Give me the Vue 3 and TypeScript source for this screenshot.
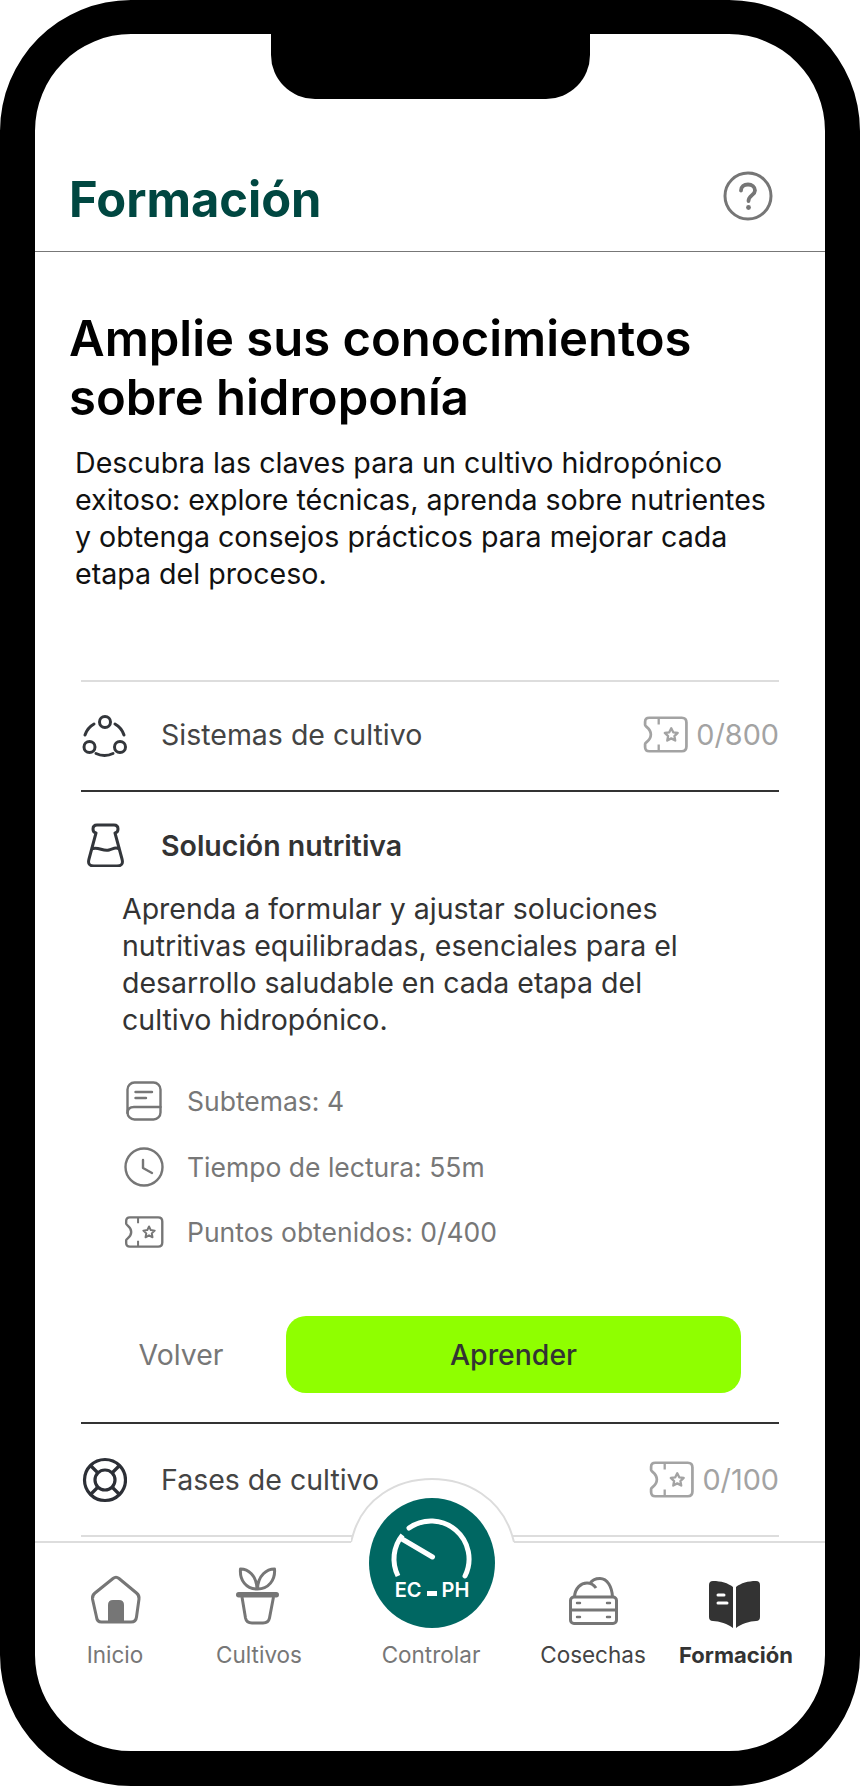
<template>
  <div class="phone">
    <svg class="defs" width="0" height="0" aria-hidden="true">
      <symbol id="ticket" viewBox="0 0 43 35">
        <path
          d="M6 1.500H37Q41.500 1.500 41.500 6V29Q41.500 33.500 37 33.500H6Q2 33.500 2 29.500V26.500C2 25 7.500 23.500 7.500 17.500C7.500 11.500 2 10 2 8.500V5.500Q2 1.500 6 1.500Z"
          fill="none"
          stroke="currentColor"
          stroke-width="2.600"
        />
        <path d="M15 1.500V8M15 27V33.500" fill="none" stroke="currentColor" stroke-width="2.200" />
        <path
          d="M27 11.500L28.900 15.400L33.200 16L30 19L30.800 23.300L27 21.200L23.200 23.300L24 19L20.800 16L25.100 15.400Z"
          fill="none"
          stroke="currentColor"
          stroke-width="2.200"
          stroke-linejoin="round"
        />
      </symbol>
    </svg>

    <div class="notch" />

    <header class="top">
      <h2 class="page-title">Formación</h2>
      <svg class="help" width="50" height="50" viewBox="0 0 50 50">
        <circle cx="25" cy="25" r="23" fill="none" stroke="#767676" stroke-width="3" />
        <path
          d="M18 19.500C18 15.500 21 13.500 25 13.500C29 13.500 32 16 32 19.500C32 24 25.500 24.500 25.500 30"
          fill="none"
          stroke="#767676"
          stroke-width="3.800"
          stroke-linecap="round"
        />
        <circle cx="25.500" cy="36.500" r="2.400" fill="#767676" />
      </svg>
    </header>

    <main class="content">
      <h1 class="headline">Amplie sus conocimientos sobre hidroponía</h1>
      <p class="intro">
        Descubra las claves para un cultivo hidropónico exitoso: explore técnicas, aprenda sobre
        nutrientes y obtenga consejos prácticos para mejorar cada etapa del proceso.
      </p>

      <section class="topics">
        <div class="topic-row first">
          <span class="topic-icon">
            <svg width="48" height="48" viewBox="0 0 48 48" fill="none" stroke="#33363b" stroke-width="3" stroke-linecap="round">
              <circle cx="24" cy="11" r="5.500" />
              <circle cx="8.500" cy="36" r="5.500" />
              <circle cx="39" cy="36" r="5.500" />
              <path d="M4 24C5.500 19.500 8.500 15.500 13 13M34 13C38.500 15.500 41.500 19.500 43 24M15 42.500C20 45 27 45 32 42.500" />
            </svg>
          </span>
          <span class="topic-name">Sistemas de cultivo</span>
          <span class="points">
            <svg class="ticket"><use href="#ticket" /></svg>
            0/800
          </span>
        </div>

        <div class="topic-open">
          <div class="open-head">
            <span class="topic-icon">
              <svg class="flask" width="37" height="44" viewBox="0 0 37 44" fill="none" stroke="#33363b" stroke-width="3" stroke-linejoin="round">
                <path d="M10 2H27Q31 2 31 6Q31 9.500 28 10L35 36Q37 43 30 43H7Q0 43 2 36L9 10Q6 9.500 6 6Q6 2 10 2Z" />
                <path d="M4.500 26C11 23 16 29 22 27S29 24 32.500 26" />
              </svg>
            </span>
            <span class="open-name">Solución nutritiva</span>
          </div>
          <p class="open-text">
            Aprenda a formular y ajustar soluciones nutritivas equilibradas, esenciales para el
            desarrollo saludable en cada etapa del cultivo hidropónico.
          </p>
          <ul class="facts">
            <li>
              <span class="fact-icon">
                <svg width="36" height="40" viewBox="0 0 36 40" fill="none" stroke="#767676" stroke-width="2.400" stroke-linecap="round">
                  <rect x="1.500" y="1.500" width="33" height="37" rx="7" />
                  <path d="M1.500 32Q1.500 26 8 26H34.500M9.500 11H26M9.500 17H20" />
                </svg>
              </span>
              Subtemas: 4
            </li>
            <li>
              <span class="fact-icon">
                <svg width="40" height="40" viewBox="0 0 40 40" fill="none" stroke="#767676" stroke-width="2.400" stroke-linecap="round" stroke-linejoin="round">
                  <circle cx="20" cy="20" r="18.500" />
                  <path d="M19 13V21L28 26" />
                </svg>
              </span>
              Tiempo de lectura: 55m
            </li>
            <li>
              <span class="fact-icon">
                <svg class="ticket-small"><use href="#ticket" /></svg>
              </span>
              Puntos obtenidos: 0/400
            </li>
          </ul>
          <div class="actions">
            <button class="btn-back" type="button">Volver</button>
            <button class="btn-learn" type="button">Aprender</button>
          </div>
        </div>

        <div class="topic-row last">
          <span class="topic-icon">
            <svg width="46" height="46" viewBox="0 0 46 46" fill="none" stroke="#2c2f36" stroke-width="3.200">
              <circle cx="24" cy="23" r="20.500" />
              <circle cx="24" cy="23" r="10" />
              <path d="M9.500 8.500L17 16M38.500 8.500L31 16M9.500 37.500L17 30M38.500 37.500L31 30" />
            </svg>
          </span>
          <span class="topic-name">Fases de cultivo</span>
          <span class="points">
            <svg class="ticket"><use href="#ticket" /></svg>
            0/100
          </span>
        </div>
      </section>
    </main>

    <nav class="tabs">
      <svg class="bump" width="164" height="68" viewBox="0 0 164 68">
        <path d="M0 67V65L2 58C12 22 45 2 81 2C117 2 150 22 161 58L163 65V67Z" fill="#fff" />
        <path d="M0 65L2 58C12 22 45 2 81 2C117 2 150 22 161 58L163 65" fill="none" stroke="#dcdcdc" stroke-width="2" />
      </svg>

      <div class="tab">
        <svg class="tab-icon" viewBox="0 0 70 66">
          <path d="M33 14.500Q36 12 39 14.500L56.500 29Q59.500 31.500 59 35L56.500 53Q56 58 51 58H21.500Q17 58 16.500 53L12.500 35Q12 31.500 15 29Z" fill="none" stroke="#767676" stroke-width="3" />
          <path d="M28 58V41Q28 36 33 36H39Q44 36 44 41V58Z" fill="#767676" />
        </svg>
        <span class="tab-label">Inicio</span>
      </div>

      <div class="tab">
        <svg class="tab-icon" viewBox="0 0 70 66">
          <path d="M16.500 5C24 5 32.500 11 33 25C22 25 15.500 16 16.500 5ZM50.500 5C43 5 34 11 33.500 25C44.500 25 51.500 16 50.500 5Z" fill="none" stroke="#767676" stroke-width="3" stroke-linejoin="round" />
          <rect x="12" y="28" width="43" height="5.500" rx="2.700" fill="#767676" />
          <path d="M18 33L21.500 54Q22.500 59 28 59H39Q44.500 59 45.500 54L49.500 33" fill="none" stroke="#767676" stroke-width="3" />
        </svg>
        <span class="tab-label">Cultivos</span>
      </div>

      <div class="tab">
        <div class="tab-icon" />
        <span class="tab-label">Controlar</span>
      </div>

      <div class="tab">
        <svg class="tab-icon" viewBox="0 0 70 66">
          <rect x="12.500" y="33" width="46" height="26.500" rx="3.500" fill="none" stroke="#767676" stroke-width="3" />
          <path d="M12.500 46H58.500" stroke="#767676" stroke-width="3" />
          <path d="M16.500 33C17 24 23 19 29 19C33 19 36 21 38 24M32 19.500C34 16 38.500 14.500 42 14.500C49.500 14.500 54 23 54.500 33" fill="none" stroke="#767676" stroke-width="3" />
          <path d="M19 39H22M49 39H52M19 53H22M49 53H52" stroke="#767676" stroke-width="2.400" stroke-linecap="round" />
        </svg>
        <span class="tab-label dark">Cosechas</span>
      </div>

      <div class="tab">
        <svg class="tab-icon" viewBox="0 0 70 66">
          <path d="M12 17C20 17 27 19 32 23V64C27 60 18 57 12 57Q8 57 8 53V21Q8 17 12 17Z" fill="#333" />
          <path d="M35 23C40 19 47 17 55 17Q59 17 59 21V53Q59 57 55 57C49 57 40 60 35 64Z" fill="#333" />
          <path d="M17 31H23M17 39H26" stroke="#fff" stroke-width="3" stroke-linecap="round" />
        </svg>
        <span class="tab-label active">Formación</span>
      </div>

      <div class="control">
        <svg width="126" height="96" viewBox="0 0 126 96" fill="none" stroke="#fff" stroke-width="5">
          <path d="M29 78A38 38 0 0 1 33.500 37" />
          <path d="M40 30A38 38 0 0 1 96 78" stroke-linecap="round" />
          <path d="M33 41L63.500 59" stroke-linecap="round" />
        </svg>
        <div class="control-text">
          <span>EC</span>
          <i class="control-dash" />
          <span>PH</span>
        </div>
      </div>
    </nav>
  </div>
</template>

<script setup lang="ts">
</script>

<style>
html,
body {
  background: #fff;
}
</style>

<style scoped>
.phone {
  position: relative;
  box-sizing: border-box;
  display: flex;
  flex-direction: column;
  width: 860px;
  height: 1786px;
  border: 35px solid #000;
  border-top-width: 34px;
  border-radius: 131px;
  background: #fff;
  overflow: hidden;
  font-family: Inter, "Noto Sans", sans-serif;
}

.defs {
  position: absolute;
}

.notch {
  position: absolute;
  top: 0;
  left: 236px;
  width: 319px;
  height: 65px;
  border-radius: 0 0 44px 44px;
  background: #000;
}

.top {
  box-sizing: border-box;
  flex: none;
  display: flex;
  align-items: center;
  justify-content: space-between;
  height: 218px;
  padding: 113px 52px 0 34px;
  border-bottom: 1px solid #777;
}

.help {
  margin-top: -6px;
}

.page-title {
  margin: 0;
  font-size: 48.800px;
  font-weight: 700;
  color: #004741;
}

.content {
  flex: 1;
  min-height: 0;
  overflow: hidden;
}

.headline {
  width: 680px;
  margin: 57px 0 0 34px;
  font-size: 49px;
  line-height: 59px;
  font-weight: 600;
  color: #000;
}

.intro {
  width: 705px;
  margin: 17px 0 0 40px;
  font-size: 28.600px;
  line-height: 37px;
  color: #111;
}

.topics {
  margin: 88px 46px 0;
}

.topic-row {
  box-sizing: border-box;
  display: flex;
  align-items: center;
  height: 110px;
  border-top: 2px solid #ddd;
  color: #444;
  font-size: 28.500px;
}

.topic-row.first {
  padding-bottom: 3px;
}

.topic-row.last {
  height: 115px;
  border-top: 2px solid #333;
  border-bottom: 2px solid #ddd;
}

.topic-icon {
  flex: none;
  display: flex;
  width: 80px;
}

.topic-name {
  flex: 1;
}

.points {
  display: flex;
  align-items: center;
  gap: 8px;
  color: #a3a3a3;
  font-size: 28.800px;
}

.ticket {
  width: 45px;
  height: 37px;
}

.ticket-small {
  width: 40px;
  height: 32px;
}

.flask {
  margin-left: 6px;
}

.topic-open {
  border-top: 2px solid #333;
  padding: 31px 0 29px;
  color: #333;
}

.open-head {
  display: flex;
  align-items: center;
  height: 44px;
}

.open-name {
  font-size: 28.500px;
  font-weight: 600;
}

.open-text {
  width: 560px;
  margin: 23px 0 0 41px;
  font-size: 28.500px;
  line-height: 37px;
}

.facts {
  margin: 30px 0 0 43px;
  padding: 0;
  list-style: none;
  color: #777;
  font-size: 26.500px;
}

.facts li {
  display: flex;
  align-items: center;
  gap: 23px;
  height: 65.700px;
}

.fact-icon {
  display: flex;
  justify-content: center;
  width: 40px;
  color: #767676;
}

.actions {
  display: flex;
  margin-top: 51px;
}

.btn-back,
.btn-learn {
  border: 0;
  background: none;
  font-family: inherit;
  font-size: 28.400px;
  height: 77px;
}

.btn-back {
  width: 200px;
  margin-right: 5px;
  color: #777;
}

.btn-learn {
  width: 455px;
  border-radius: 20px;
  background: #8fff00;
  color: #333;
  font-weight: 500;
}

.tabs {
  position: relative;
  box-sizing: border-box;
  flex: none;
  display: grid;
  grid-template-columns: 130px 158px 186px 138px 148px;
  height: 210px;
  padding: 21px 0 0 15px;
  border-top: 2px solid #ddd;
}

.bump {
  position: absolute;
  top: -66px;
  left: 316px;
}

.tab {
  display: flex;
  flex-direction: column;
  align-items: center;
}

.tab-icon {
  width: 70px;
  height: 66px;
}

.tab-label {
  margin-top: 9px;
  font-size: 22.500px;
  line-height: 32px;
  color: #777;
}

.tab-label.dark {
  color: #444;
}

.tab-label.active {
  font-size: 22px;
  font-weight: 700;
  color: #333;
}

.control {
  position: absolute;
  top: -45px;
  left: 334px;
  width: 126px;
  height: 130px;
  border-radius: 50%;
  background: #006762;
}

.control svg {
  display: block;
}

.control-text {
  display: flex;
  align-items: center;
  justify-content: center;
  gap: 5px;
  margin-top: -14px;
  font-size: 20px;
  font-weight: 600;
  line-height: 20px;
  color: #fff;
}

.control-dash {
  width: 10px;
  height: 5px;
  margin-top: 7px;
  background: #fff;
}
</style>
